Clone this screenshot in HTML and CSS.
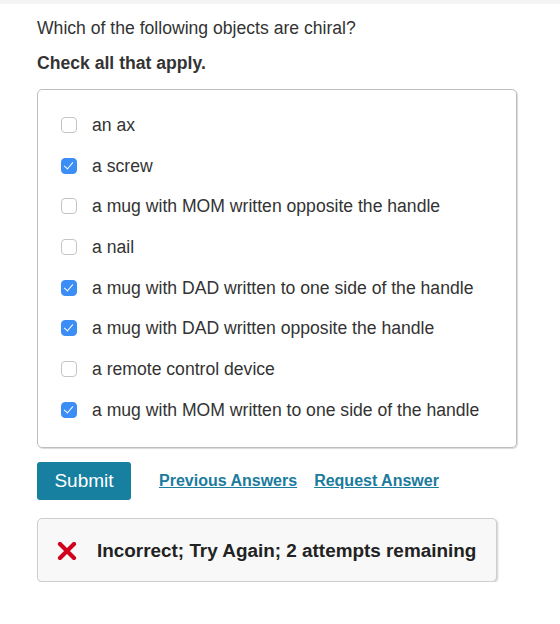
FILE: index.html
```html
<!DOCTYPE html>
<html lang="en">
<head>
  <meta charset="UTF-8" />
  <title>Chirality question</title>
  <link rel="stylesheet" href="styles.css">
</head>
<body>
  <div class="topbar"></div>
  <div class="part">
    <p class="prompt">Which of the following objects are chiral?</p>
    <p class="instr">Check all that apply.</p>

    <div class="choices">
      <label class="choice"><input type="checkbox"> <span>an ax</span></label>
      <label class="choice"><input type="checkbox" checked> <span>a screw</span></label>
      <label class="choice"><input type="checkbox"> <span>a mug with MOM written opposite the handle</span></label>
      <label class="choice"><input type="checkbox"> <span>a nail</span></label>
      <label class="choice"><input type="checkbox" checked> <span>a mug with DAD written to one side of the handle</span></label>
      <label class="choice"><input type="checkbox" checked> <span>a mug with DAD written opposite the handle</span></label>
      <label class="choice"><input type="checkbox"> <span>a remote control device</span></label>
      <label class="choice"><input type="checkbox" checked> <span>a mug with MOM written to one side of the handle</span></label>
    </div>

    <div class="actions">
      <button class="submit">Submit</button>
      <a href="#" class="link">Previous Answers</a>
      <a href="#" class="link">Request Answer</a>
    </div>

    <div class="feedback">
      <svg class="xmark" width="20" height="18" viewBox="0 0 20 18">
        <path d="M3 2 L17 16 M17 2 L3 16" stroke="#d0021b" stroke-width="4.2" stroke-linecap="round"/>
      </svg>
      <span>Incorrect; Try Again; 2 attempts remaining</span>
    </div>
  </div>
</body>
</html>
```

FILE: styles.css
```css
body { margin: 0; font-family: "Liberation Sans", Arial, sans-serif; color: #222; background: #fff; }
.topbar { height: 4px; background: #f4f4f4; }
.part { padding: 0 0 0 37px; width: 480px; }
.prompt { margin: 14px 0 0; font-size: 17.6px; line-height: 20px; color: #333; }
.instr { margin: 15px 0 0; font-size: 17.6px; line-height: 20px; font-weight: bold; color: #333; }

.choices {
  margin-top: 16px;
  border: 1px solid #bdbdbd;
  border-radius: 5px;
  box-shadow: 1px 1px 1px rgba(0,0,0,0.15);
  padding: 25px 0 27px 23px;
  display: flex;
  flex-direction: column;
  gap: 20.7px;
}
.choice { display: flex; align-items: center; gap: 15px; font-size: 17.6px; line-height: 20px; color: #333; }
.choice input {
  appearance: none;
  margin: 0;
  width: 16px;
  height: 16px;
  border: 1px solid #c4c4c4;
  border-radius: 4px;
  background: #fff;
  position: relative;
}
.choice input:checked { background: #3b8ef5; border-color: #3b8ef5; }
.choice input:checked::after {
  content: "";
  position: absolute;
  left: 4px;
  top: 1px;
  width: 4px;
  height: 8px;
  border: solid #fff;
  border-width: 0 1.5px 1.5px 0;
  transform: rotate(40deg);
}

.actions { display: flex; align-items: center; margin-top: 14px; }
.submit {
  background: #177fa0;
  color: #fff;
  border: none;
  border-radius: 3px;
  font-family: inherit;
  font-size: 19px;
  width: 94px;
  height: 38px;
  margin-right: 28px;
}
.link { color: #1a7b9d; font-weight: bold; font-size: 16px; text-decoration: underline; margin-right: 17px; }

.feedback {
  margin-top: 18px;
  width: 460px;
  height: 64px;
  box-sizing: border-box;
  border: 1px solid #cfcfcf;
  border-radius: 5px;
  background: #f8f8f8;
  box-shadow: 1px 1px 2px rgba(0,0,0,0.2);
  display: flex;
  align-items: center;
  padding: 2px 0 0 19px;
  gap: 20px;
  font-weight: bold;
  font-size: 18.9px;
  color: #222;
}
.xmark { flex: none; }
```
